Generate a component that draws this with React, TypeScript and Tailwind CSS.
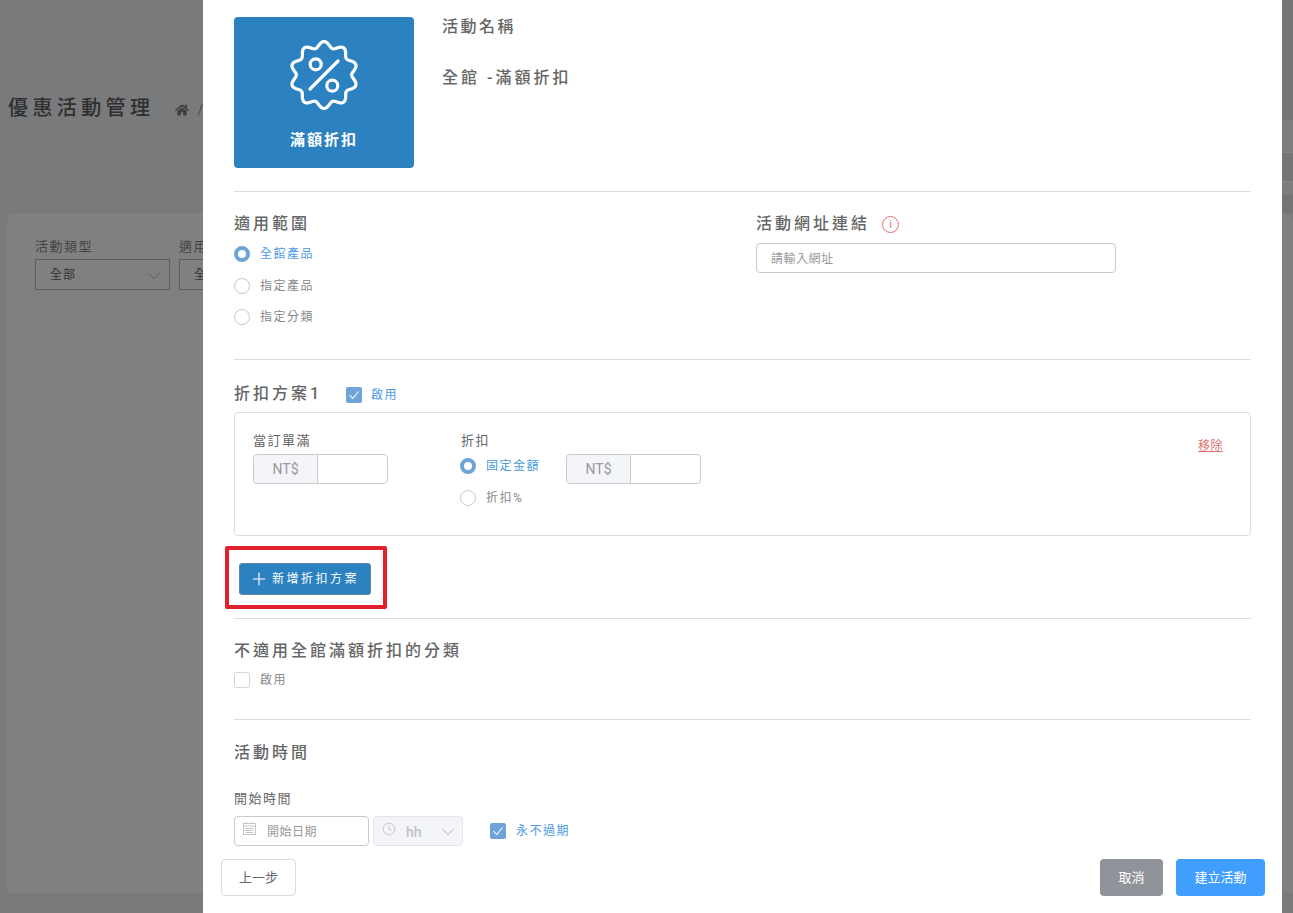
import { ChevronDown, Clock, Plus } from "lucide-react";
import { FaHome } from "react-icons/fa";
import type { ReactNode } from "react";

const FONT = "font-['Roboto','Noto_Sans_CJK_TC','Noto_Sans',sans-serif]";

// 10 rounded lobes around the center of a 70x72 box
const BADGE_PATH =
  Array.from({ length: 200 }, (_, i) => {
    const t = (i / 200) * Math.PI * 2;
    const r = 30.6 + 2.9 * Math.cos(10 * t);
    const x = 35 + r * Math.sin(t);
    const y = 36 - r * Math.cos(t);
    return `${i === 0 ? "M" : "L"}${x.toFixed(2)} ${y.toFixed(2)}`;
  }).join("") + "Z";

function Divider() {
  return <div className="h-px bg-[#dedede]" />;
}

function Heading({ children }: { children: ReactNode }) {
  return <h3 className="text-base leading-6 font-medium tracking-[3px] text-[#666]">{children}</h3>;
}

function FieldLabel({ children }: { children: ReactNode }) {
  return <p className="text-[13px] leading-4 tracking-[1.5px] text-[#666]">{children}</p>;
}

function Radio({ label, checked }: { label: string; checked?: boolean }) {
  return (
    <label className="flex items-center gap-[10px] text-xs leading-4 tracking-[1.5px]">
      <span
        className={
          checked
            ? "h-4 w-4 rounded-full border-[4px] border-[#6ea4d8] bg-white"
            : "h-4 w-4 rounded-full border border-[#c8c8c8] bg-white"
        }
      />
      <span className={checked ? "text-[#4a9be0]" : "text-[#888]"}>{label}</span>
    </label>
  );
}

function Check({ label, checked, tight }: { label: string; checked?: boolean; tight?: boolean }) {
  return (
    <label className={`flex items-center text-xs leading-4 tracking-[1.5px] ${tight ? "gap-[9px]" : "gap-[10px]"}`}>
      {checked ? (
        <span className="flex h-4 w-4 items-center justify-center rounded-[2px] bg-[#6ea4d8]">
          <svg viewBox="0 0 16 16" className="h-4 w-4" fill="none" stroke="#fff" strokeWidth="1.1">
            <path d="M3.500 8l3.200 3.500 5.800-7" />
          </svg>
        </span>
      ) : (
        <span className="h-4 w-4 rounded-[2px] border border-[#d8d8d8] bg-white" />
      )}
      <span className={checked ? "text-[#4a9be0]" : "text-[#888]"}>{label}</span>
    </label>
  );
}

function MoneyInput() {
  return (
    <div className="flex h-[30px] w-[135px] rounded-[4px] border border-[#c9c9d0] text-sm text-[#999]">
      <span className="flex w-[64px] items-center justify-center rounded-l-[4px] border-r border-[#c9c9d0] bg-[#f4f5f9]">
        NT$
      </span>
      <span className="flex-1" />
    </div>
  );
}

function BadgeIcon() {
  return (
    <svg viewBox="0 0 70 72" className="h-[72px] w-[70px]" fill="none" stroke="#fff" strokeWidth="3.2" strokeLinecap="round" strokeLinejoin="round">
      <path d={BADGE_PATH} />
      <circle cx="26.700" cy="25.300" r="5.500" />
      <circle cx="43.300" cy="46.700" r="5.500" />
      <path d="M49 22L21 50" />
    </svg>
  );
}

function CalendarIcon() {
  return (
    <svg viewBox="0 0 13 13" className="-mt-[5px] h-[13px] w-[13px]" fill="none" stroke="#c6c6c6" strokeWidth="1">
      <rect x="0.500" y="1.500" width="12" height="11" />
      <path d="M0.500 4h12M2.500 6.500h8M2.500 8.500h8M2.500 10.500h8M3.500 0v2M9.500 0v2" />
    </svg>
  );
}

function BackgroundPage() {
  return (
    <div>
      <div className="flex h-[213px] items-center pt-[3px] pl-2">
        <h1 className="text-xl font-medium tracking-[4.400px] text-[#2f2f2f]">優惠活動管理</h1>
        <div className="mt-[3px] ml-[21px] flex items-center gap-2 text-sm text-[#4a4a4a]">
          <FaHome size={14} color="#3f3f3f" />
          <span>/</span>
        </div>
      </div>
      <div className="ml-[7px] h-[680px] rounded-t-lg bg-[#808080] pt-[26px] pl-7">
        <div className="flex gap-[9px]">
          <div className="w-[135px]">
            <p className="mb-1 text-[13px] leading-4 tracking-[1.5px] text-[#444]">活動類型</p>
            <div className="flex h-[31px] items-center justify-between border border-[#5e5e5e] pr-[5px] pl-[14px] text-xs tracking-[1px] text-[#333]">
              全部
              <ChevronDown size={20} strokeWidth={1} color="#555" className="mt-[3px]" />
            </div>
          </div>
          <div className="w-[135px]">
            <p className="mb-1 text-[13px] leading-4 tracking-[1.5px] text-[#444]">適用範圍</p>
            <div className="flex h-[31px] items-center border border-[#5e5e5e] pl-[14px] text-xs tracking-[1px] text-[#333]">全部</div>
          </div>
        </div>
      </div>
      {/* table rows peeking out right of the modal */}
      <div className="absolute top-0 right-0 flex h-[213px] w-[11px] flex-col bg-[#747577] pt-[120px]">
        <div className="h-[33px] border-b border-[#858585] bg-[#7e7e7e]" />
        <div className="h-[29px] border-b border-[#858585]" />
        <div className="h-[13px] bg-[#7e7e7e]" />
      </div>
    </div>
  );
}

export default function App() {
  return (
    <div className={`${FONT} relative h-[913px] w-[1293px] overflow-hidden bg-[#797a7c]`}>
      <BackgroundPage />

      {/* Modal */}
      <div className="absolute top-0 left-[203px] h-[913px] w-[1079px] bg-white px-[31px] pt-[17px]">
        <div className="flex h-[151px] gap-7">
          <div className="flex w-[180px] flex-col items-center rounded-[4px] bg-[#2c82c0] pt-[22px] text-white">
            <BadgeIcon />
            <span className="mt-[19px] text-[15px] leading-5 font-bold tracking-[2px]">滿額折扣</span>
          </div>
          <div className="text-[#666]">
            <div className="text-base leading-5 font-medium tracking-[2.500px]">活動名稱</div>
            <div className="mt-[31px] text-base leading-5 font-medium tracking-[3px]">全館 -滿額折扣</div>
          </div>
        </div>

        <div className="mt-[23px]">
          <Divider />
        </div>

        <div className="flex h-[167px] pt-[20px]">
          <div className="w-[522px]">
            <Heading>適用範圍</Heading>
            <div className="mt-[10px] flex flex-col gap-[15.500px]">
              <Radio label="全館產品" checked />
              <Radio label="指定產品" />
              <Radio label="指定分類" />
            </div>
          </div>
          <div className="w-[360px]">
            <div className="flex items-center gap-3">
              <Heading>活動網址連結</Heading>
              <span className="mt-px flex h-[17px] w-[17px] items-center justify-center rounded-full border border-[#e0736d] text-[11px] leading-none text-[#e0736d]">
                i
              </span>
            </div>
            <div className="mt-[7px] flex h-[30px] items-center rounded-[4px] border border-[#c9c9c9] px-[14px] pt-px text-xs tracking-[0.500px] text-[#999]">
              請輸入網址
            </div>
          </div>
        </div>

        <Divider />

        <div className="mt-[22px] flex items-center gap-6">
          <Heading>折扣方案1</Heading>
          <div className="mt-[2px]">
            <Check label="啟用" checked tight />
          </div>
        </div>

        <div className="relative mt-[6px] flex h-[124px] rounded-[4px] border border-[#dedede] pt-[20px] pl-[18px]">
          <div className="w-[207px]">
            <FieldLabel>當訂單滿</FieldLabel>
            <div className="mt-[5px]">
              <MoneyInput />
            </div>
          </div>
          <div>
            <div className="ml-px">
              <FieldLabel>折扣</FieldLabel>
            </div>
            <div className="mt-[5px] flex items-start gap-[26px]">
              <div className="flex flex-col gap-4 pt-1">
                <Radio label="固定金額" checked />
                <Radio label="折扣%" />
              </div>
              <MoneyInput />
            </div>
          </div>
          <a className="absolute top-[25px] right-[27px] text-xs leading-4 tracking-[0.500px] text-[#e0736d] underline">移除</a>
        </div>

        {/* Highlighted add button */}
        <div className="mt-[10px] -ml-[9px] h-[63px] w-[162px] rounded-[2px] border-[4px] border-[#e0202c] pt-[13px] pl-[10px]">
          <button className="flex h-[32px] w-[132px] items-center gap-[3px] rounded-[3px] border border-[#5f86a8] bg-[#2c82c0] pl-[9px] text-xs tracking-[2.500px] text-white">
            <Plus size={20} strokeWidth={1.4} />
            新增折扣方案
          </button>
        </div>

        <div className="mt-[9px]">
          <Divider />
        </div>

        <div className="mt-[20px]">
          <Heading>不適用全館滿額折扣的分類</Heading>
        </div>
        <div className="mt-[9px]">
          <Check label="啟用" />
        </div>

        <div className="mt-[31px]">
          <Divider />
        </div>

        <div className="mt-[21px]">
          <Heading>活動時間</Heading>
        </div>

        <div className="mt-[26px]">
          <FieldLabel>開始時間</FieldLabel>
        </div>
        <div className="mt-[9px] flex items-center">
          <div className="flex h-[30px] w-[135px] items-center rounded-[4px] border border-[#c9c9d0] pl-2 text-xs text-[#999]">
            <CalendarIcon />
            <span className="mt-[2px] ml-[11px] tracking-[0.500px]">開始日期</span>
          </div>
          <div className="ml-1 flex h-[30px] w-[90px] items-center rounded-[4px] border border-[#e4e4ea] bg-[#f4f5f9] pr-[3px] pl-2 text-sm text-[#c0c0c4]">
            <Clock size={14} strokeWidth={1.2} color="#b5b5b5" className="-mt-[5px]" />
            <span className="mt-px ml-[10px] flex-1 font-medium">hh</span>
            <ChevronDown size={22} strokeWidth={1} color="#aaa" className="mt-px" />
          </div>
          <div className="ml-[27px]">
            <Check label="永不過期" checked />
          </div>
        </div>
      </div>

      {/* Modal footer */}
      <div className="absolute top-[859px] left-[221px] flex w-[1044px] justify-between text-[13px]">
        <button className="h-[37px] w-[75px] rounded-[4px] border border-[#dcdcdc] bg-white text-[#666]">上一步</button>
        <div className="flex gap-[13px]">
          <button className="h-[37px] w-[63px] rounded-[4px] bg-[#909399] text-white">取消</button>
          <button className="h-[37px] w-[89px] rounded-[4px] bg-[#409eff] text-white">建立活動</button>
        </div>
      </div>
    </div>
  );
}
